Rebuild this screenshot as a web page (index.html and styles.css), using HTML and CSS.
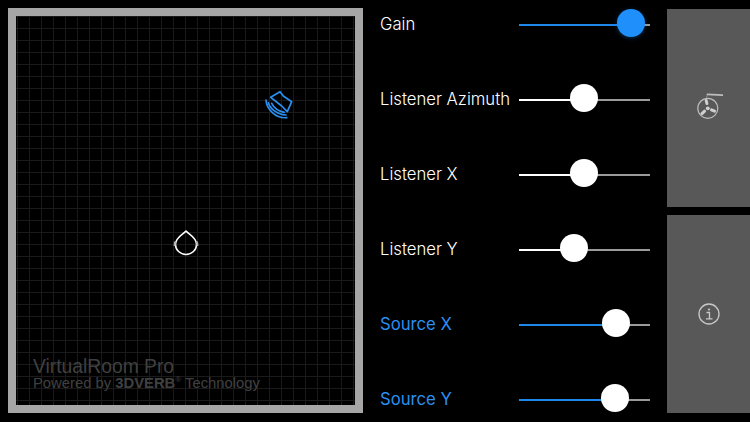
FILE: index.html
```html
<!DOCTYPE html>
<html>
<head>
<title>VirtualRoom Pro</title>
<link rel="stylesheet" href="styles.css">
</head>
<body>
<div class="room">
  <svg class="marker source" width="30" height="32" viewBox="0 0 30 32" fill="none" stroke="#2a8ff0" stroke-width="1.7" stroke-linecap="round" stroke-linejoin="round">
    <path d="M5.7 8.3 L15 2.7 L18.3 7 L26.7 12.7 L22.3 22.7 L16.7 17 Z"/>
    <path d="M6.7 14.3 C8.5 18 13 22 19.3 23.3"/>
    <path d="M3.3 13.7 C5 19.5 12 25.5 21 26"/>
    <path d="M1 11 C1.5 20 10.5 29.5 21.7 28.7"/>
  </svg>
  <svg class="marker listener" width="30" height="30" viewBox="0 0 30 30" fill="none" stroke="#fff" stroke-width="1.5" stroke-linejoin="round">
    <path d="M15 4 C13 7 4.5 10 4.5 17.5 A10.5 10 0 0 0 25.5 17.5 C25.5 10 17 7 15 4 Z"/>
    <path class="ear" d="M4 14.5 L3.5 19 M26 14.5 L26.5 19"/>
  </svg>
  <div class="brand">
    <div class="brand-name">VirtualRoom Pro</div>
    <div class="brand-sub">Powered by <b>3DVERB</b><sup>®</sup> Technology</div>
  </div>
</div>

<div class="controls">
  <div class="row">
    <span class="label">Gain</span>
    <div class="slider blue"><div class="fill" style="width:85.5%"></div><div class="thumb thumb-blue" style="left:85.5%"></div></div>
  </div>
  <div class="row">
    <span class="label">Listener Azimuth</span>
    <div class="slider"><div class="fill" style="width:49.5%"></div><div class="thumb" style="left:49.5%"></div></div>
  </div>
  <div class="row">
    <span class="label">Listener X</span>
    <div class="slider"><div class="fill" style="width:49.5%"></div><div class="thumb" style="left:49.5%"></div></div>
  </div>
  <div class="row">
    <span class="label">Listener Y</span>
    <div class="slider"><div class="fill" style="width:42%"></div><div class="thumb" style="left:42%"></div></div>
  </div>
  <div class="row">
    <span class="label label-blue">Source X</span>
    <div class="slider blue"><div class="fill" style="width:74%"></div><div class="thumb" style="left:74%"></div></div>
  </div>
  <div class="row">
    <span class="label label-blue">Source Y</span>
    <div class="slider blue"><div class="fill" style="width:73%"></div><div class="thumb" style="left:73%"></div></div>
  </div>
</div>

<div class="buttons">
  <div class="button">
    <svg width="28" height="30" viewBox="0 0 28 30" fill="none" stroke="#bdbdbd" stroke-linecap="round">
      <circle cx="12.8" cy="15.3" r="10" stroke-width="1.2"/>
      <circle cx="12.8" cy="15.3" r="1.9" fill="#d0d0d0" stroke="none"/>
      <path d="M11.9 10.5 L11.2 7.5 M16.5 16.8 L19.5 18.2 M9.6 18.2 L7 20.6" stroke-width="3" stroke="#d0d0d0"/>
      <path d="M11.5 4.5 L12.3 2" stroke-width="1" stroke="#8c8c8c"/>
      <path d="M12.5 1.4 L27.5 2.2" stroke-width="1.8"/>
    </svg>
  </div>
  <div class="button">
    <svg width="24" height="24" viewBox="0 0 24 24" fill="none" stroke="#c8c8c8">
      <circle cx="12" cy="12" r="10" stroke-width="1.3"/>
      <circle cx="12" cy="7.5" r="1.1" fill="#c8c8c8" stroke="none"/>
      <path d="M9.5 10.5 H12.5 V16.5 M9 16.8 H15.5" stroke-width="1.3"/>
    </svg>
  </div>
</div>
</body>
</html>
```

FILE: styles.css
```css
/* VirtualRoom main screen */

html, body
{ margin: 0;
height: 100%;
overflow: hidden;
}

body
{ display: flex;
background-color: #000;
font-family: "Inter", "Liberation Sans", sans-serif;
}

/* Room view */

.room
{ position: relative;
box-sizing: border-box;
flex: none;
width: 355px;
height: 405px;
margin: 8px 0 0 8px;
border: 8px solid #a6a6a6;
background-color: #000;
background-image:
  linear-gradient(#1a1a1a 1px, transparent 1px),
  linear-gradient(90deg, #1a1a1a 1px, transparent 1px);
background-size: 12px 12px;
background-position: 1px 0;
}

.marker
{ position: absolute;
}

.source
{ left: 249px;
top: 73px;
}

.listener
{ left: 155px;
top: 211px;
}

.ear
{ stroke: #b0b0b0;
stroke-width: 2;
}

.brand
{ position: absolute;
left: 17px;
bottom: 14px;
color: #404040;
}

.brand-name
{ font-family: "Liberation Sans", sans-serif;
font-size: 19.3px;
line-height: 16px;
}

.brand-sub
{ font-family: "Liberation Sans", sans-serif;
font-size: 14.8px;
line-height: 16px;
white-space: nowrap;
}

.brand-sub sup
{ font-size: 8px;
line-height: 0;
}

/* Sliders */

.controls
{ flex: none;
width: 270px;
margin-left: 17px;
}

.row
{ display: flex;
align-items: center;
justify-content: space-between;
height: 28px;
margin-top: 10px;
margin-bottom: 47px;
}

.label
{ color: #fff;
font-size: 16.7px;
font-weight: 300;
white-space: nowrap;
}

.label-blue
{ color: #2a8ff0;
font-weight: 400;
}

.slider
{ position: relative;
flex: none;
width: 131px;
height: 2px;
margin-top: 2px;
background-color: #9a9a9a;
}

.fill
{ height: 2px;
background-color: #fff;
}

.blue .fill
{ background-color: #1f86ea;
}

.thumb
{ position: absolute;
top: -15px;
width: 28px;
height: 28px;
margin-left: -14px;
border-radius: 50%;
background-color: #fff;
}

.thumb-blue
{ background-color: #1e8ffb;
box-shadow: 0 1px 4px rgba(30, 143, 251, 0.35);
}

/* Right hand buttons */

.buttons
{ display: flex;
flex: none;
flex-direction: column;
gap: 8px;
width: 83px;
margin: 9px 0 0 17px;
}

.button
{ display: flex;
align-items: center;
justify-content: center;
height: 198px;
background-color: #585858;
}
```
